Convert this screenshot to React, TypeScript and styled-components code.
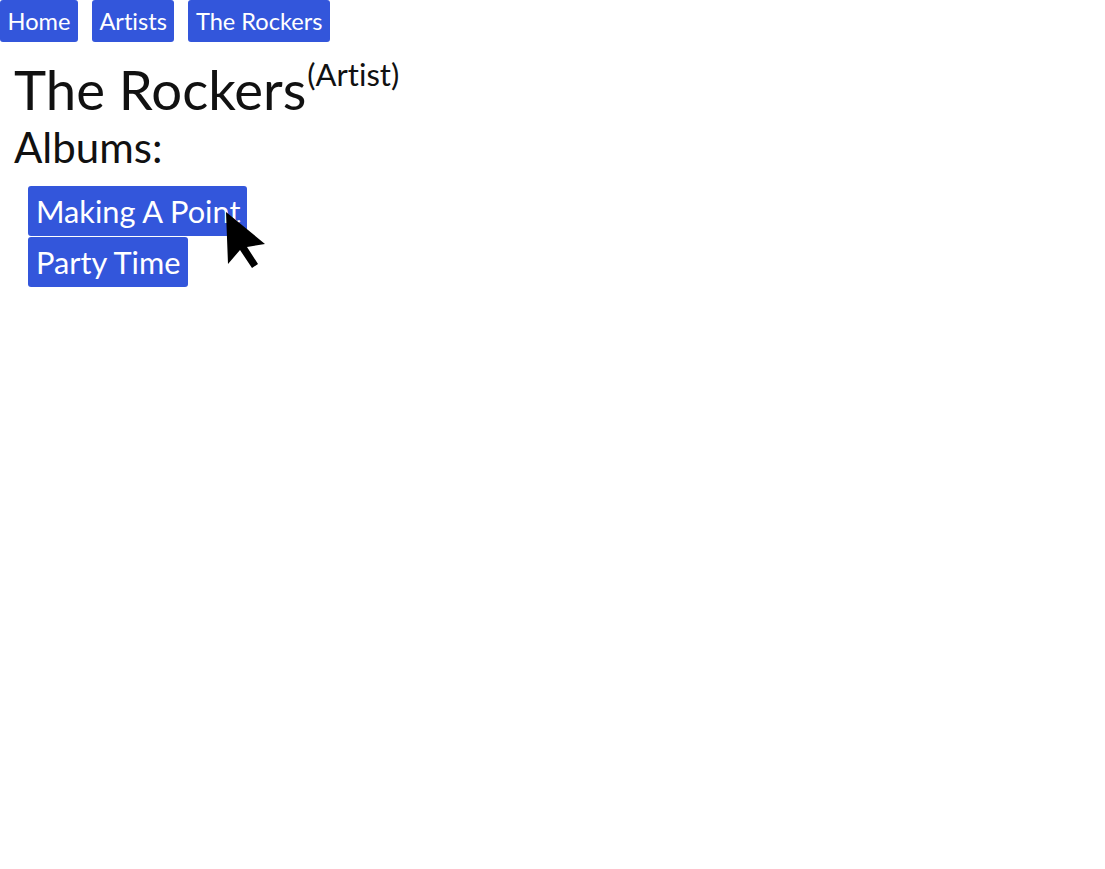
import React from "react";
import styled, { createGlobalStyle } from "styled-components";

const GlobalStyle = createGlobalStyle`
  body {
    margin: 0;
    background: #fff;
    font-family: Lato, "Liberation Sans", sans-serif;
    font-variant-ligatures: none;
    color: #111;
  }
`;

const Page = styled.div`
  position: relative;
  width: 1105px;
  height: 869px;
`;

const Nav = styled.nav`
  display: flex;
  gap: 14px;
`;

const NavButton = styled.a`
  display: flex;
  align-items: center;
  height: 42px;
  padding: 0 7.5px;
  background: #3356db;
  color: #fff;
  font-size: 23.6px;
  border-radius: 3px;
  text-decoration: none;
  box-sizing: border-box;
`;

const Content = styled.div`
  padding: 0 14px;
`;

const Title = styled.h1`
  margin: 14px 0 0;
  font-size: 54.5px;
  font-weight: 400;
  line-height: 66px;

  sup {
    font-size: 31px;
    vertical-align: 24px;
    line-height: 0;
    margin-left: 1px;
  }
`;

const SubTitle = styled.h2`
  margin: 0;
  font-size: 42px;
  font-weight: 400;
  line-height: 1.2;
`;

const AlbumList = styled.div`
  display: flex;
  flex-direction: column;
  align-items: flex-start;
  gap: 1px;
  padding: 14px 28px 0;
`;

const AlbumButton = styled.a`
  display: flex;
  align-items: center;
  height: 50px;
  padding: 0 7px 0 8px;
  background: #3356db;
  color: #fff;
  font-size: 30.75px;
  border-radius: 3px;
  text-decoration: none;
  box-sizing: border-box;
`;

const Cursor = styled.svg`
  position: absolute;
  left: 224px;
  top: 210px;
`;

const albums = ["Making A Point", "Party Time"];

export default function App() {
  return (
    <Page>
      <GlobalStyle />
      <Nav>
        <NavButton href="#">Home</NavButton>
        <NavButton href="#">Artists</NavButton>
        <NavButton href="#">The Rockers</NavButton>
      </Nav>
      <Content>
        <Title>
          The Rockers<sup>(Artist)</sup>
        </Title>
        <SubTitle>Albums:</SubTitle>
      </Content>
      <AlbumList>
        {albums.map((a) => (
          <AlbumButton key={a} href="#">
            {a}
          </AlbumButton>
        ))}
      </AlbumList>
      <Cursor width="44" height="60" viewBox="0 0 44 60">
        <path
          d="M2 2 L4 54 L16 40 L28 58 L34 54 L23 37 L41 34 Z"
          fill="#000"
          strokeLinejoin="round"
        />
      </Cursor>
    </Page>
  );
}
